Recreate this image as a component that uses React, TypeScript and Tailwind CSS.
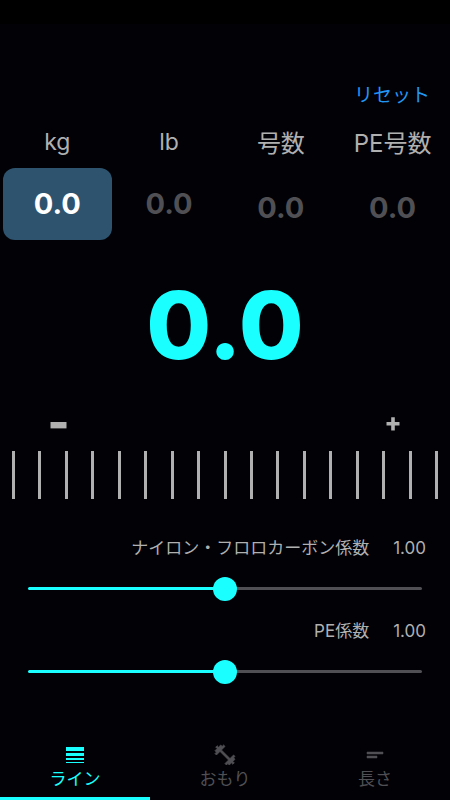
import { useState } from 'react'
import { MdFitnessCenter, MdLineWeight, MdShortText } from 'react-icons/md'
import clsx from 'clsx'

const UNITS = [
  { id: 'kg', label: 'kg', text: 'text-[23px] leading-8' },
  { id: 'lb', label: 'lb', text: 'text-[23px] leading-8' },
  { id: 'go', label: '号数', text: 'text-[24px] leading-9' },
  { id: 'pe', label: 'PE号数', text: 'text-[24px] leading-9' },
]

const TABS = [
  { id: 'line', label: 'ライン', Icon: MdLineWeight, strokeWidth: 0 },
  { id: 'sinker', label: 'おもり', Icon: MdFitnessCenter, strokeWidth: 0.8 },
  { id: 'length', label: '長さ', Icon: MdShortText, strokeWidth: 0.5 },
]

const TICKS = 17
const MIN = 0.5
const MAX = 1.5

type UnitColumnProps = {
  id: string
  label: string
  text: string
  value: number
  selected: boolean
  onSelect: () => void
}

function UnitColumn({
  id,
  label,
  text,
  value,
  selected,
  onSelect,
}: UnitColumnProps) {
  return (
    <div className="flex flex-col gap-2.5 text-center">
      <span id={`unit-${id}`} className={text}>
        {label}
      </span>
      <button
        type="button"
        aria-labelledby={`unit-${id}`}
        aria-pressed={selected}
        onClick={onSelect}
        className={clsx(
          'h-[72px] rounded-xl text-[29px] font-bold',
          selected ? 'bg-[#2e536e] text-white' : 'text-[#505054]'
        )}
      >
        {value.toFixed(1)}
      </button>
    </div>
  )
}

type CoefficientProps = {
  id: string
  label: string
  value: number
  onChange: (value: number) => void
}

function Coefficient({ id, label, value, onChange }: CoefficientProps) {
  const percent = ((value - MIN) / (MAX - MIN)) * 100

  return (
    <div className="flex flex-col gap-[27px]">
      <div className="flex justify-end gap-6 pr-6 text-[17px] leading-6">
        <label htmlFor={id}>{label}</label>
        <output htmlFor={id}>{value.toFixed(2)}</output>
      </div>
      <div className="flex px-7">
        <input
          id={id}
          type="range"
          min={MIN}
          max={MAX}
          step={0.01}
          value={value}
          onChange={(e) => onChange(Number(e.target.value))}
          style={{
            backgroundImage: `linear-gradient(to right, #1affff ${percent}%, #505054 ${percent}%)`,
          }}
          className="h-[3px] w-full appearance-none rounded-full [&::-webkit-slider-thumb]:size-6 [&::-webkit-slider-thumb]:appearance-none [&::-webkit-slider-thumb]:rounded-full [&::-webkit-slider-thumb]:bg-[#1affff]"
        />
      </div>
    </div>
  )
}

export default function App() {
  const [unit, setUnit] = useState('kg')
  const [tab, setTab] = useState('line')
  const [amount, setAmount] = useState(0)
  const [nylon, setNylon] = useState(1)
  const [pe, setPe] = useState(1)

  const reset = () => {
    setAmount(0)
    setNylon(1)
    setPe(1)
  }

  return (
    <div className="flex min-h-screen flex-col bg-[#010106] font-['Inter','Noto_Sans_CJK_JP',sans-serif] text-[#b0b0b0]">
      <div className="h-6 bg-black" />

      <main className="flex flex-col pt-[60px]">
        <div className="flex justify-end px-5">
          <button
            type="button"
            onClick={reset}
            className="text-[19px] leading-6 text-[#2196f3]"
          >
            リセット
          </button>
        </div>

        <div className="grid grid-cols-4 gap-[3px] px-[3px] pt-[18px]">
          {UNITS.map((u) => (
            <UnitColumn
              key={u.id}
              {...u}
              value={amount}
              selected={unit === u.id}
              onSelect={() => setUnit(u.id)}
            />
          ))}
        </div>

        <p className="pt-[33px] text-center text-[94px] leading-24 font-extrabold text-[#1affff]">
          {amount.toFixed(1)}
        </p>

        <div className="flex justify-between px-[46px] pt-10">
          <button
            type="button"
            aria-label="−"
            onClick={() => setAmount(Math.max(0, amount - 0.1))}
          >
            <svg viewBox="0 0 24 24" className="size-6" fill="currentColor">
              <path d="M4.5 9h16v6.4h-16z" />
            </svg>
          </button>
          <button
            type="button"
            aria-label="+"
            onClick={() => setAmount(amount + 0.1)}
          >
            <svg viewBox="0 0 24 24" className="size-6" fill="currentColor">
              <path d="M11.2 4.3h3.6v4.8h4.7v3.5h-4.7v4.8h-3.6v-4.8H6.5V9.1h4.7z" />
            </svg>
          </button>
        </div>

        <div className="flex justify-between px-3 pt-3.5">
          {Array.from({ length: TICKS }, (_, i) => (
            <span key={i} className="h-12 w-[3px] bg-[#b0b0b0]" />
          ))}
        </div>

        <div className="flex flex-col gap-[29px] pt-[37px]">
          <Coefficient
            id="nylon"
            label="ナイロン・フロロカーボン係数"
            value={nylon}
            onChange={setNylon}
          />
          <Coefficient id="pe" label="PE係数" value={pe} onChange={setPe} />
        </div>
      </main>

      <nav className="mt-auto grid grid-cols-3">
        {TABS.map(({ id, label, Icon, strokeWidth }) => (
          <button
            key={id}
            type="button"
            aria-current={tab === id ? 'page' : undefined}
            onClick={() => setTab(id)}
            className={clsx(
              'flex flex-col items-center border-b-[3px] pb-1.5 text-[17px] leading-6',
              tab === id
                ? 'border-[#1affff] text-[#1affff]'
                : 'border-transparent text-[#505054]'
            )}
          >
            {/* the icons carry an empty 24x24 frame path, keep it out of the stroke */}
            <Icon
              className="size-6 [&>path[fill=none]]:hidden"
              strokeWidth={strokeWidth}
            />
            {label}
          </button>
        ))}
      </nav>
    </div>
  )
}
